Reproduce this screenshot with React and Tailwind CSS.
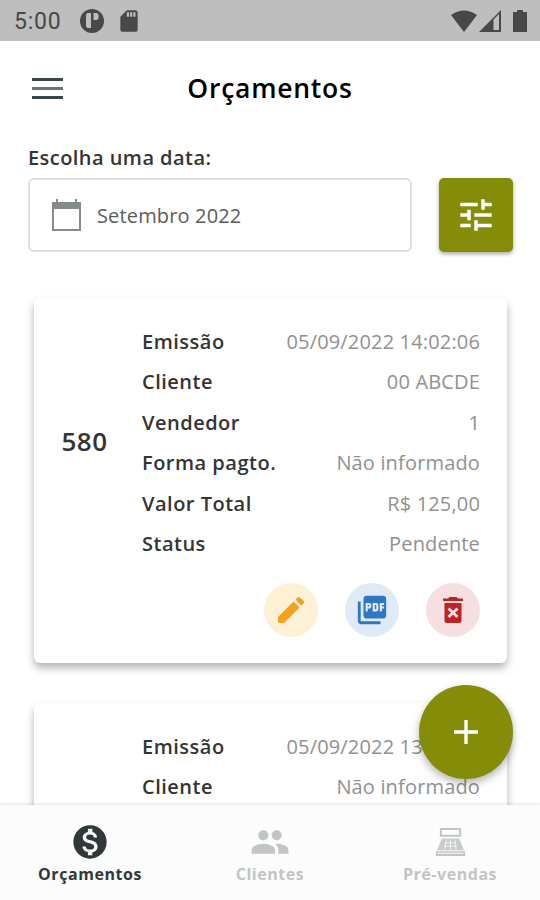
import { MdTune, MdPictureAsPdf, MdMonetizationOn, MdPeople, MdSdCard } from 'react-icons/md';

function StatusBar() {
  return (
    <div className="flex h-[41px] shrink-0 items-center bg-[#bebebe] pl-[14px] pr-[13px] text-[#484848]">
      <span className="w-[47px] whitespace-nowrap pt-[2px] font-[Roboto] text-[23px] leading-none tracking-[0.8px]">5:00</span>
      <svg className="ml-[19px]" width="24" height="24" viewBox="0 0 24 24">
        <circle cx="12" cy="12" r="12" fill="currentColor" />
        <path d="M6 6a2 2 0 0 1 2-2h3v15H8a2 2 0 0 1-2-2zM13.500 4h2.500a2.500 2.500 0 0 1 2.500 2.500v2A2.500 2.500 0 0 1 16 11h-2.500z" fill="#bebebe" />
      </svg>
      <MdSdCard className="ml-[12px] size-[26px]" />
      <div className="ml-auto flex items-center">
        <svg width="26" height="22" viewBox="0 0 26 22"><path d="M0 5Q13-4 26 5L13 22z" fill="currentColor" /></svg>
        <svg className="ml-[2px]" width="22" height="22" viewBox="0 0 22 22">
          <path d="M0 22 22 0V22zM14.500 9.500V20H20V4z" fill="currentColor" fillRule="evenodd" />
        </svg>
        <svg className="ml-[12px]" width="14" height="22" viewBox="0 0 14 22"><path d="M4 0h6v2h4v20H0V2h4z" fill="currentColor" /></svg>
      </div>
    </div>
  );
}

function Row({ label, value }) {
  return (
    <div className="flex h-[40.500px] items-center justify-between whitespace-nowrap text-[20px] leading-[40px]">
      <span className="font-semibold tracking-[0.5px] text-[#343434]">{label}</span>
      <span className="tracking-[0.16px] text-[#919191]">{value}</span>
    </div>
  );
}

function Card({ code, rows }) {
  return (
    <section className="ml-[34px] mr-[33px] flex h-[365px] shrink-0 rounded-[6px] bg-white pr-[27px] shadow-[0_5px_8px_rgba(0,0,0,0.3)]">
      <div className="flex w-[108px] shrink-0 justify-center pr-[7px] pt-[123px] text-[26px] font-semibold leading-[40px] tracking-[0.4px] text-[#343434]">{code}</div>
      <div className="flex min-w-0 flex-1 flex-col pt-[23.500px]">
        {rows.map(([label, value]) => <Row key={label} label={label} value={value} />)}
        <div className="mt-[18.500px] flex justify-end gap-[27px]">
          <button className="grid size-[54px] place-items-center rounded-full bg-[#fdf0d5] text-[#f3a31b]">
            <svg width="26" height="26" viewBox="0 0 26 26" fill="currentColor">
              <path d="M0 20 15.500 4.500l6 6L6 26H1.500A1.500 1.500 0 0 1 0 24.500zM17.500 2.500l2-2a1.800 1.800 0 0 1 2.500 0L25.500 4a1.800 1.800 0 0 1 0 2.500l-2 2z" />
            </svg>
          </button>
          <button className="grid size-[54px] place-items-center rounded-full bg-[#dfeaf6] text-[#2e78c3]"><MdPictureAsPdf className="size-[34px]" /></button>
          <button className="grid size-[54px] place-items-center rounded-full bg-[#f6dfe0] text-[#bf2127]">
            <svg width="20" height="26" viewBox="0 0 20 26">
              <path d="M0 1.500h5L6.500 0h7L15 1.500h5V4H0z" fill="currentColor" />
              <path d="M1.500 6h17v17.500a2.500 2.500 0 0 1-2.500 2.500H4a2.500 2.500 0 0 1-2.500-2.500z" fill="currentColor" />
              <path d="m5.500 11.500 9 8.500m0-8.500-9 8.500" stroke="#f6dfe0" strokeWidth="3" />
            </svg>
          </button>
        </div>
      </div>
    </section>
  );
}

function CashRegister() {
  return (
    <svg width="29" height="28" viewBox="0 0 30 29" fill="currentColor">
      <path d="M4 0h22v9H4zM6 2v5h18V2z" fillRule="evenodd" />
      <path d="M6 11h18l5 12H1z" opacity="0.9" />
      <path d="M10.500 12 9.300 22M15 12v10M19.500 12l1.200 10M9 15.300h12M8 18.700h14" stroke="#fcfcfc" strokeWidth="0.800" fill="none" />
      <path d="M0 24h30v5H0zM1.500 25.600v1h27v-1z" fillRule="evenodd" />
    </svg>
  );
}

function Tab({ icon, label, className }) {
  return (
    <button className={`flex flex-1 flex-col items-center ${className}`}>
      <span className="mt-[17px] flex h-[40px] items-center justify-center">{icon}</span>
      <span className="text-[16px] font-bold leading-[24px] tracking-[0.55px]">{label}</span>
    </button>
  );
}

export default function App() {
  return (
    <div className="relative flex h-[900px] w-[540px] flex-col overflow-hidden bg-white font-['Open_Sans',sans-serif]">
      <StatusBar />
      <header className="relative flex h-[95px] shrink-0 items-center justify-center pb-[1px]">
        <button className="absolute left-[32px] top-[37px] flex w-[31px] flex-col gap-[6px]">
          <span className="h-[3px] bg-[#39464a]" />
          <span className="h-[3px] bg-[#6b7678]" />
          <span className="h-[3px] bg-[#39464a]" />
        </button>
        <h1 className="text-[26.500px] font-semibold leading-none tracking-[0.75px] text-black">Orçamentos</h1>
      </header>
      <div className="shrink-0 pl-[28px] pr-[27px] pt-[8px]">
        <div className="h-[34px] text-[20px] font-semibold leading-[28px] tracking-[0.45px] text-[#343434]">Escolha uma data:</div>
        <div className="flex justify-between">
          <div className="flex h-[74px] w-[384px] items-center rounded-[6px] border-2 border-[#dce0e1] pl-[22px] text-[20px] tracking-[0.15px] text-[#5c5c5c]">
            <svg width="29" height="32" viewBox="0 0 29 32" className="mr-[16px]">
              <path d="M0 3h4V0h2v3h17V0h2v3h4v29H0zM2 10v20h25V10z" fill="#858b8b" fillRule="evenodd" />
            </svg>
            <span className="pt-[2px]">Setembro 2022</span>
          </div>
          <button className="grid size-[74px] place-items-center rounded-[5px] bg-[#858c08] text-white shadow-[0_2px_4px_rgba(0,0,0,0.35)]"><MdTune className="size-[42px]" /></button>
        </div>
      </div>
      <main className="flex min-h-0 flex-1 flex-col gap-[40px] overflow-hidden pt-[46px]">
        <Card code="580" rows={[
          ['Emissão', '05/09/2022 14:02:06'], ['Cliente', '00 ABCDE'], ['Vendedor', '1'],
          ['Forma pagto.', 'Não informado'], ['Valor Total', 'R$ 125,00'], ['Status', 'Pendente'],
        ]} />
        <Card rows={[['Emissão', '05/09/2022 13:58:12'], ['Cliente', 'Não informado']]} />
      </main>
      <nav className="flex h-[95px] shrink-0 bg-[#fcfcfc] shadow-[0_-1px_3px_rgba(0,0,0,0.12)]">
        <Tab label="Orçamentos" className="text-[#30383a]" icon={<MdMonetizationOn className="size-[40px]" />} />
        <Tab label="Clientes" className="text-[#c1c5c5]" icon={<MdPeople className="size-[40px]" />} />
        <Tab label="Pré-vendas" className="text-[#c1c5c5]" icon={<CashRegister />} />
      </nav>
      <button className="absolute left-[419px] top-[685px] grid size-[94px] place-items-center rounded-full bg-[#858c08] text-white shadow-[0_4px_8px_rgba(0,0,0,0.3)]">
        <svg width="24" height="24" viewBox="0 0 24 24"><path d="M12 0v24M0 12h24" stroke="currentColor" strokeWidth="3.400" /></svg>
      </button>
    </div>
  );
}
